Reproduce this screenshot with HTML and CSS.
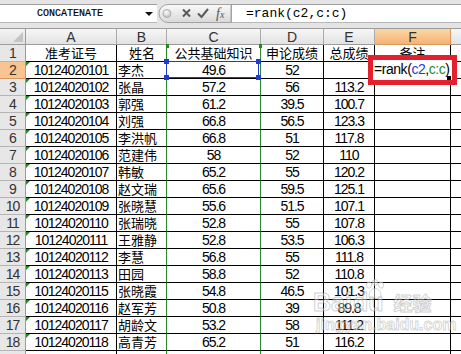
FILE: index.html
```html
<!DOCTYPE html>
<html>
<head>
<meta charset="utf-8">
<link rel="stylesheet" href="styles.css">
</head>
<body>
<div class="page">
  <div class="fbar">
    <div class="namebox"><span class="nbtext">CONCATENATE</span><span class="dd"></span></div>
    <svg class="fbtns" width="74" height="19" viewBox="0 0 74 19">
      <defs>
        <linearGradient id="pg" x1="0" y1="0" x2="0" y2="1">
          <stop offset="0" stop-color="#fafafa"/>
          <stop offset="1" stop-color="#d9d9d9"/>
        </linearGradient>
        <radialGradient id="cg" cx="0.4" cy="0.35" r="0.7">
          <stop offset="0" stop-color="#ffffff"/>
          <stop offset="1" stop-color="#b9b9b9"/>
        </radialGradient>
      </defs>
      <path d="M11 0.5 H74 V18.5 H11 A9 9 0 0 1 11 0.5 Z" fill="url(#pg)" stroke="#a3a3a3"/>
      <circle cx="10" cy="9.5" r="4" fill="url(#cg)" stroke="#b0b0b0"/>
      <path d="M26 5.5 L33 12.5 M33 5.5 L26 12.5" stroke="#5a5a5a" stroke-width="2" fill="none"/>
      <path d="M41 9.5 L44.5 13 L51 5" stroke="#5a5a5a" stroke-width="2" fill="none"/>
      <text x="59" y="14" class="fxt">f<tspan class="fxs">x</tspan></text>
    </svg>
    <div class="finput">=rank(c2,c:c)</div>
  </div>

  <div class="sheet">
    <div class="corner"></div><div class="ch">A</div><div class="ch">B</div><div class="ch">C</div><div class="ch">D</div><div class="ch">E</div><div class="ch chsel">F</div><div class="ch chlast"></div>

    <div class="rh">1</div><div class="c a hd">准考证号</div><div class="c b hd">姓名</div><div class="c cc hd">公共基础知识</div><div class="c d hd">申论成绩</div><div class="c e hd">总成绩</div><div class="c f hd">备注</div><div class="c g"></div>

    <div class="rh rhsel">2</div><div class="c a t">10124020101</div><div class="c b">李杰</div><div class="c cc">49.6</div><div class="c d">52</div><div class="c e"></div><div class="c f"></div><div class="c g"></div>
    <div class="rh">3</div><div class="c a t">10124020102</div><div class="c b">张晶</div><div class="c cc">57.2</div><div class="c d">56</div><div class="c e">113.2</div><div class="c f"></div><div class="c g"></div>
    <div class="rh">4</div><div class="c a t">10124020103</div><div class="c b">郭强</div><div class="c cc">61.2</div><div class="c d">39.5</div><div class="c e">100.7</div><div class="c f"></div><div class="c g"></div>
    <div class="rh">5</div><div class="c a t">10124020104</div><div class="c b">刘强</div><div class="c cc">66.8</div><div class="c d">56.5</div><div class="c e">123.3</div><div class="c f"></div><div class="c g"></div>
    <div class="rh">6</div><div class="c a t">10124020105</div><div class="c b">李洪帆</div><div class="c cc">66.8</div><div class="c d">51</div><div class="c e">117.8</div><div class="c f"></div><div class="c g"></div>
    <div class="rh">7</div><div class="c a t">10124020106</div><div class="c b">范建伟</div><div class="c cc">58</div><div class="c d">52</div><div class="c e">110</div><div class="c f"></div><div class="c g"></div>
    <div class="rh">8</div><div class="c a t">10124020107</div><div class="c b">韩敏</div><div class="c cc">65.2</div><div class="c d">55</div><div class="c e">120.2</div><div class="c f"></div><div class="c g"></div>
    <div class="rh">9</div><div class="c a t">10124020108</div><div class="c b">赵文瑞</div><div class="c cc">65.6</div><div class="c d">59.5</div><div class="c e">125.1</div><div class="c f"></div><div class="c g"></div>
    <div class="rh">10</div><div class="c a t">10124020109</div><div class="c b">张晓慧</div><div class="c cc">55.6</div><div class="c d">51.5</div><div class="c e">107.1</div><div class="c f"></div><div class="c g"></div>
    <div class="rh">11</div><div class="c a t">10124020110</div><div class="c b">张瑞晓</div><div class="c cc">52.8</div><div class="c d">55</div><div class="c e">107.8</div><div class="c f"></div><div class="c g"></div>
    <div class="rh">12</div><div class="c a t">10124020111</div><div class="c b">王雅静</div><div class="c cc">52.8</div><div class="c d">53.5</div><div class="c e">106.3</div><div class="c f"></div><div class="c g"></div>
    <div class="rh">13</div><div class="c a t">10124020112</div><div class="c b">李慧</div><div class="c cc">56.8</div><div class="c d">55</div><div class="c e">111.8</div><div class="c f"></div><div class="c g"></div>
    <div class="rh">14</div><div class="c a t">10124020113</div><div class="c b">田园</div><div class="c cc">58.8</div><div class="c d">52</div><div class="c e">110.8</div><div class="c f"></div><div class="c g"></div>
    <div class="rh">15</div><div class="c a t">10124020115</div><div class="c b">张晓霞</div><div class="c cc">54.8</div><div class="c d">46.5</div><div class="c e">101.3</div><div class="c f"></div><div class="c g"></div>
    <div class="rh">16</div><div class="c a t">10124020116</div><div class="c b">赵军芳</div><div class="c cc">50.8</div><div class="c d">39</div><div class="c e">89.8</div><div class="c f"></div><div class="c g"></div>
    <div class="rh">17</div><div class="c a t">10124020117</div><div class="c b">胡龄文</div><div class="c cc">53.2</div><div class="c d">58</div><div class="c e">111.2</div><div class="c f"></div><div class="c g"></div>
    <div class="rh">18</div><div class="c a t">10124020118</div><div class="c b">高青芳</div><div class="c cc">65.2</div><div class="c d">51</div><div class="c e">116.2</div><div class="c f"></div><div class="c g"></div>
    <div class="rh rhend"></div><div class="c a end"></div><div class="c b end"></div><div class="c cc end"></div><div class="c d end"></div><div class="c e end"></div><div class="c f end"></div><div class="c g end"></div>
  </div>

  <div class="refsel"><span class="hdl h1"></span><span class="hdl h2"></span><span class="hdl h3"></span><span class="hdl h4"></span></div>
  <span class="gmark gm1"></span><span class="gmark gm2"></span>

  <div class="editcell">=rank(<span class="rb">c2</span>,<span class="rg">c:c</span>)<span class="fillh"></span></div>
  <div class="redbox"></div>

  <div class="wm">
    <svg class="paw" width="22" height="22" viewBox="0 0 22 22">
      <ellipse cx="5" cy="6" rx="2.5" ry="3.2"/>
      <ellipse cx="11" cy="3.5" rx="2.5" ry="3.2"/>
      <ellipse cx="17" cy="6" rx="2.5" ry="3.2"/>
      <path d="M5 17 C5 12 8 9.5 11 9.5 C14 9.5 17 12 17 17 C17 20 14 20 11 19 C8 20 5 20 5 17 Z"/>
    </svg>
    <div class="wm1">Bai<span class="du">du</span><span class="jy">经验</span></div>
    <div class="wm2">jingyan.baidu.com</div>
  </div>
</div>
</body>
</html>
```
FILE: styles.css
```css
html, body {
  margin: 0;
  padding: 0;
  background: #fff;
}

.page {
  position: relative;
  width: 461px;
  height: 354px;
  overflow: hidden;
}

/* formula bar */
.fbar {
  height: 28px;
  box-sizing: border-box;
  padding-top: 4px;
  background: #e4e4e4;
  display: flex;
  align-items: flex-start;
}

.namebox {
  width: 157px;
  height: 19px;
  box-sizing: border-box;
  background: #fff;
  border-top: 1px solid #9f9f9f;
  border-bottom: 1px solid #b8b8b8;
  display: flex;
  align-items: center;
}

.nbtext {
  width: 140px;
  text-align: center;
  font: 10px/17px "Liberation Mono", monospace;
  color: #000;
  -webkit-text-stroke: 0.2px #000;
}

.dd {
  margin-left: 5px;
  width: 0;
  height: 0;
  border-left: 4px solid transparent;
  border-right: 4px solid transparent;
  border-top: 4px solid #111;
}

.fbtns {
  display: block;
  flex: none;
}

.fxt {
  font-family: "Liberation Serif", serif;
  font-style: italic;
  font-size: 14px;
  fill: #555;
}

.fxs {
  font-size: 10px;
}

.finput {
  flex: 1;
  height: 19px;
  box-sizing: border-box;
  background: #fff;
  border-top: 1px solid #9f9f9f;
  border-bottom: 1px solid #b8b8b8;
  border-left: 1px solid #a3a3a3;
  padding-left: 14px;
  font: 13px/17px "Liberation Mono", monospace;
  color: #000;
  white-space: nowrap;
}

/* sheet grid */
.sheet {
  display: grid;
  grid-template-columns: 26px 91px 50px 94px 63px 51px 76px 10px;
  grid-template-rows: 17px repeat(18, 17px) 3px;
  font-family: "Liberation Sans", "Noto Sans CJK SC", sans-serif;
  font-size: 14px;
  color: #000;
}

.sheet > div {
  box-sizing: border-box;
  overflow: hidden;
  white-space: nowrap;
}

.corner {
  border-top: 1px solid #9b9b9b;
  border-right: 1px solid #9b9b9b;
  border-bottom: 1px solid #9b9b9b;
  background: linear-gradient(#f4f4f4, #e1e1e1);
  position: relative;
}

.corner::after {
  content: "";
  position: absolute;
  right: 2px;
  bottom: 2px;
  width: 0;
  height: 0;
  border-left: 10px solid transparent;
  border-bottom: 10px solid #c4c4c4;
}

.ch {
  border-top: 1px solid #9b9b9b;
  border-right: 1px solid #ababab;
  border-bottom: 1px solid #9b9b9b;
  background: linear-gradient(#f7f7f7, #e2e2e2);
  text-align: center;
  font-size: 14px;
  line-height: 16px;
  color: #333;
}

.chsel {
  background: linear-gradient(#fbd7a6, #f6b274);
  border-right-color: #d9975d;
  border-bottom-color: #d9975d;
}

.chlast {
  border-right: none;
}

.rh {
  border-right: 1px solid #9b9b9b;
  border-bottom: 1px solid #b4b4b4;
  background: #e7e7e7;
  text-align: center;
  font-size: 14px;
  letter-spacing: -1px;
  line-height: 17px;
  color: #333;
}

.rhsel {
  background: #f8c491;
  border-bottom-color: #d9975d;
}

.rhend {
  border-bottom: none;
}

.c {
  border-right: 1px solid #000;
  border-bottom: 1px solid #000;
  line-height: 17px;
  letter-spacing: -1px;
}

.c.end {
  border-bottom: none;
}

.a, .cc, .d, .e, .hd {
  text-align: center;
}

.b {
  padding-left: 1px;
  font-size: 13px;
  letter-spacing: 0;
  border-right-color: #2c8a2c;
}

.cc {
  border-right-color: #2c8a2c;
}

.hd {
  font-size: 13px;
  letter-spacing: 0;
}

.b.hd {
  text-align: center;
}

.g {
  border-right: none;
}

.t {
  position: relative;
}

.t::before {
  content: "";
  position: absolute;
  left: 0;
  top: 0;
  width: 0;
  height: 0;
  border-top: 4px solid #1f8a1f;
  border-right: 4px solid transparent;
}

/* overlays */
.refsel {
  position: absolute;
  left: 166px;
  top: 61px;
  width: 93px;
  height: 17px;
  box-sizing: border-box;
  border: 1px solid #1f3bd1;
}

.hdl {
  position: absolute;
  width: 5px;
  height: 5px;
  background: #1f3bd1;
}

.h1 { left: -3px; top: -3px; }
.h2 { right: -3px; top: -3px; }
.h3 { left: -3px; bottom: -3px; }
.h4 { right: -3px; bottom: -3px; }

.gmark {
  position: absolute;
  top: 44px;
  width: 3px;
  height: 4px;
  background: #1f8a1f;
}

.gm1 { left: 166px; }
.gm2 { left: 259px; }

.editcell {
  position: absolute;
  left: 372px;
  top: 60px;
  width: 81px;
  height: 20px;
  background: #fff;
  font-family: "Liberation Sans", sans-serif;
  font-size: 14px;
  letter-spacing: -0.45px;
  line-height: 19px;
  padding-left: 2px;
  box-sizing: border-box;
  color: #000;
  white-space: nowrap;
}

.rb { color: #1f3bd1; }
.rg { color: #2c8a2c; }

.fillh {
  position: absolute;
  right: 2px;
  bottom: 0;
  width: 4px;
  height: 4px;
  background: #000;
}

.redbox {
  position: absolute;
  left: 368px;
  top: 55px;
  width: 89px;
  height: 30px;
  box-sizing: border-box;
  border: 5px solid #e3202b;
}

.wm {
  position: absolute;
  left: 313px;
  top: 279px;
  width: 125px;
  height: 60px;
  pointer-events: none;
}

.paw {
  position: absolute;
  left: 51px;
  top: 0;
  fill: rgba(255, 255, 255, 0.5);
  stroke: rgba(160, 160, 160, 0.45);
  stroke-width: 1;
}

.wm1 {
  position: absolute;
  left: 0;
  top: 10px;
  font: bold 25px/26px "Liberation Sans", "Noto Sans CJK SC", sans-serif;
  color: rgba(255, 255, 255, 0.4);
  -webkit-text-stroke: 1px rgba(150, 150, 150, 0.45);
  white-space: nowrap;
}

.du { margin-left: 1px; }

.jy {
  margin-left: 10px;
  font-size: 19px;
}

.wm2 {
  position: absolute;
  left: 3px;
  top: 37px;
  font: bold 16px/18px "Liberation Sans", sans-serif;
  color: rgba(255, 255, 255, 0.4);
  -webkit-text-stroke: 1px rgba(150, 150, 150, 0.4);
  white-space: nowrap;
}
```
